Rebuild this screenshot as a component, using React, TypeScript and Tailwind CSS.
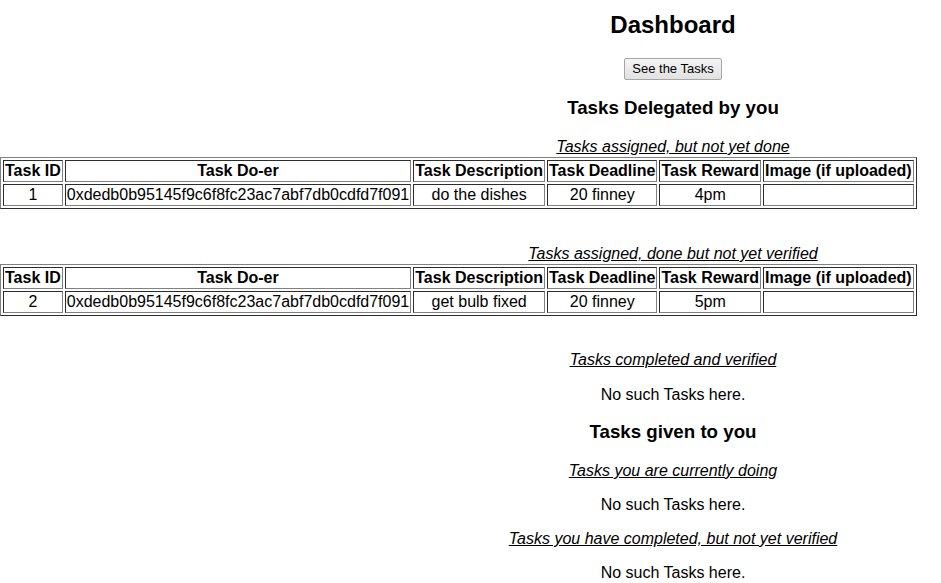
import React from 'react';

type Task = {
  id: string;
  doer: string;
  description: string;
  deadline: string;
  reward: string;
};

const headers = ['Task ID', 'Task Do-er', 'Task Description', 'Task Deadline', 'Task Reward', 'Image (if uploaded)'];

function Caption({ children, className = '' }: { children: React.ReactNode; className?: string }) {
  return <p className={`text-center text-[16px] leading-[18px] italic underline ${className}`}>{children}</p>;
}

function Empty({ className = '' }: { className?: string }) {
  return <p className={`text-center text-[16px] leading-[18px] ${className}`}>No such Tasks here.</p>;
}

function TaskTable({ task, className = '' }: { task: Task; className?: string }) {
  const cell = 'border border-[#808080] [border-style:inset] p-px text-center leading-[18px] whitespace-nowrap';
  return (
    <table
      className={`border-separate border-spacing-[2px] border border-[#808080] [border-style:outset] text-[16px] ${className}`}
    >
      <thead>
        <tr>
          {headers.map((h) => (
            <th key={h} className={`${cell} font-bold`}>
              {h}
            </th>
          ))}
        </tr>
      </thead>
      <tbody>
        <tr>
          <td className={cell}>{task.id}</td>
          <td className={cell}>{task.doer}</td>
          <td className={cell}>{task.description}</td>
          <td className={cell}>{task.deadline}</td>
          <td className={cell}>{task.reward}</td>
          <td className={cell}></td>
        </tr>
      </tbody>
    </table>
  );
}

export default function App() {
  const pending: Task = {
    id: '1',
    doer: '0xdedb0b95145f9c6f8fc23ac7abf7db0cdfd7f091',
    description: 'do the dishes',
    deadline: '20 finney',
    reward: '4pm',
  };
  const done: Task = {
    id: '2',
    doer: '0xdedb0b95145f9c6f8fc23ac7abf7db0cdfd7f091',
    description: 'get bulb fixed',
    deadline: '20 finney',
    reward: '5pm',
  };

  return (
    <div className="h-[583px] w-[941px] overflow-hidden bg-white font-['Liberation_Sans',Arial,sans-serif] text-black">
      <div className="w-[1346px]">
        <h2 className="mt-[11px] text-center text-[24px] leading-[28px] font-bold">Dashboard</h2>

        <div className="mt-[19px] flex justify-center">
          <button className="h-[22px] rounded-[2px] border border-[#a6a6a6] bg-gradient-to-b from-[#f4f4f4] to-[#e2e2e2] px-[7px] text-[13px] leading-[20px] text-black">
            See the Tasks
          </button>
        </div>

        <h3 className="mt-[17px] text-center text-[18.72px] leading-[22px] font-bold">Tasks Delegated by you</h3>

        <Caption className="mt-[19px]">Tasks assigned, but not yet done</Caption>
        <TaskTable task={pending} className="mt-[1px]" />

        <Caption className="mt-[36px]">Tasks assigned, done but not yet verified</Caption>
        <TaskTable task={done} className="mt-[1px]" />

        <Caption className="mt-[35px]">Tasks completed and verified</Caption>
        <Empty className="mt-[17px]" />

        <h3 className="mt-[17px] text-center text-[18.72px] leading-[22px] font-bold">Tasks given to you</h3>
        <Caption className="mt-[19px]">Tasks you are currently doing</Caption>
        <Empty className="mt-[16px]" />

        <Caption className="mt-[16px]">Tasks you have completed, but not yet verified</Caption>
        <Empty className="mt-[16px]" />
      </div>
    </div>
  );
}
